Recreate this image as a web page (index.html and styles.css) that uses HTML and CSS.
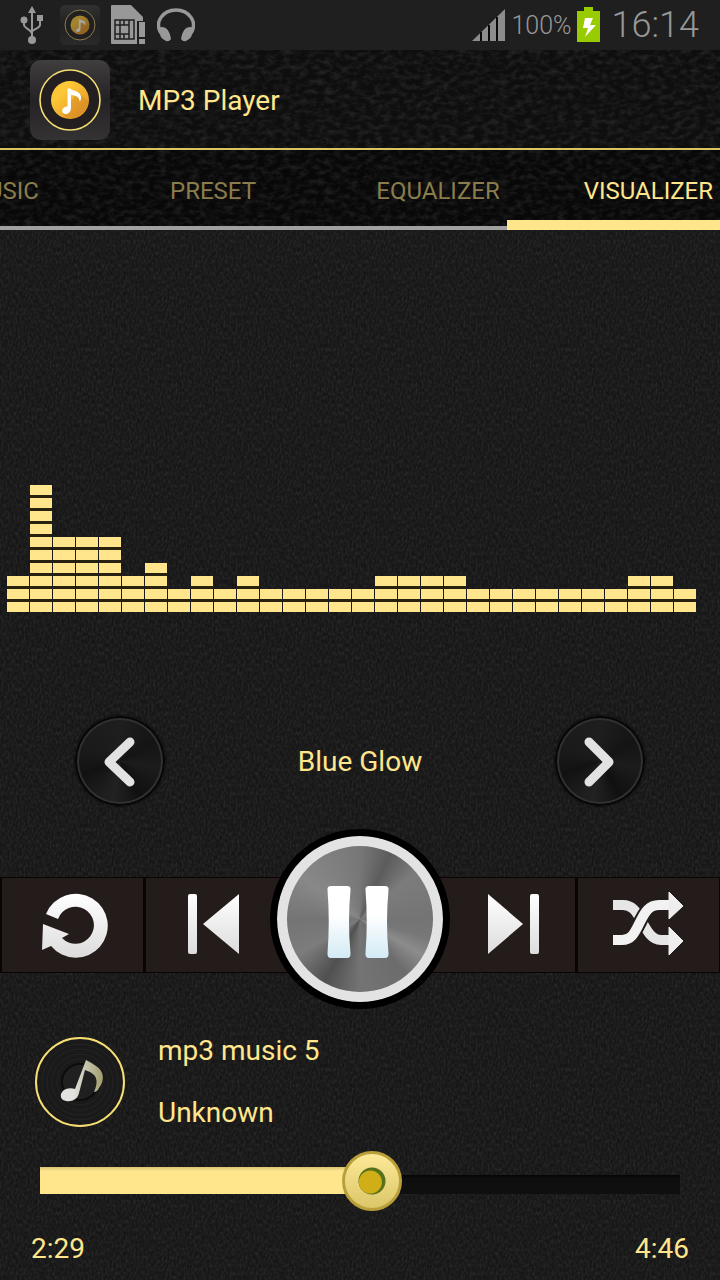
FILE: index.html
```html
<!DOCTYPE html>
<html lang="en">
<head>
    <meta charset="UTF-8">
    <meta name="viewport" content="width=device-width, initial-scale=1.0">
    <title>MP3 Player</title>

    <link rel="stylesheet" href="styles.css">
</head>
<body>

    <!-- shared gradients -->
    <svg class="defs" width="0" height="0" aria-hidden="true">
        <defs>
            <linearGradient id="silver" x1="0" y1="0" x2="0" y2="1">
                <stop offset="0" stop-color="#ffffff"/>
                <stop offset="1" stop-color="#dcdcdc"/>
            </linearGradient>
            <linearGradient id="ice" x1="0" y1="0" x2="0" y2="1">
                <stop offset="0.4" stop-color="#ffffff"/>
                <stop offset="1" stop-color="#d3ebf5"/>
            </linearGradient>
            <linearGradient id="tile" x1="0" y1="0" x2="0" y2="1">
                <stop offset="0" stop-color="#403e3f"/>
                <stop offset="0.5" stop-color="#242224"/>
                <stop offset="1" stop-color="#343233"/>
            </linearGradient>
            <linearGradient id="gold" x1="0" y1="0" x2="1" y2="1">
                <stop offset="0.3" stop-color="#fcc736"/>
                <stop offset="1" stop-color="#dd8b20"/>
            </linearGradient>
            <linearGradient id="noteGold" x1="0" y1="0" x2="1" y2="0">
                <stop offset="0.3" stop-color="#e2e2e0"/>
                <stop offset="1" stop-color="#a39e6c"/>
            </linearGradient>
            <symbol id="appIcon" viewBox="0 0 80 80">
                <rect width="80" height="80" rx="11" fill="url(#tile)"/>
                <circle cx="40" cy="40" r="30" fill="#231f20" stroke="#f6de72" stroke-width="1.6"/>
                <circle cx="40" cy="40" r="19" fill="url(#gold)"/>
                <path d="M48 32 58 41A19 19 0 0 1 36 58L32 53Z" fill="#c97820" opacity=".3"/>
                <path d="M37.500 28.500h2.500c2 2.500 10 2 11 8 .4 2.500-.5 4-1.200 5-.3-4.500-4-6-8.800-6.500v13c0 4-3 6.500-6 6-3.500-.6-4-5 0-7 1-.5 1.800-.6 2.500-.6z" fill="#fff"/>
            </symbol>
        </defs>
    </svg>

    <div class="status">
        <svg width="24" height="40" viewBox="0 0 24 40" fill="none" stroke="#989898" stroke-width="2">
            <path d="M12 8v26M4 16v4c0 3 8 5 8 9M20 15v5c0 3-8 5-8 7"/>
            <path d="M12 1l4 7H8zM17 10h6v6h-6z" fill="#989898" stroke="none"/>
            <circle cx="4" cy="15" r="3.500" fill="#989898" stroke="none"/>
            <circle cx="12" cy="35" r="4" fill="#989898" stroke="none"/>
        </svg>
        <svg class="dim" width="40" height="40"><use href="#appIcon"/></svg>
        <svg width="34" height="40" viewBox="0 0 34 40">
            <path d="M0 1q0-1 1-1h19l12 12v4h-6v23H1q-1 0-1-1z" fill="#989898"/>
            <path d="M4 15h19v19H4zM9 20h9v9H9zM9 15v5M13 15v5M18 15v5M9 29v5M13 29v5M18 29v5M4 20h5M4 29h5" fill="none" stroke="#1f1f1f" stroke-width="1.500"/>
            <path d="M28 17h6v15h-6zM28 34h6v5h-6z" fill="#989898"/>
        </svg>
        <svg width="38" height="34" viewBox="0 0 38 34">
            <path d="M4 25C-3 14 6 2 19 2s22 12 15 23" fill="none" stroke="#989898" stroke-width="3.500"/>
            <path d="M4 19q8-1 10 12-2 3-5 2-7-3-7-12zM34 19q-8-1-10 12 2 3 5 2 7-3 7-12z" fill="#989898"/>
        </svg>
        <svg class="signal" width="33" height="32" viewBox="0 0 33 32">
            <path d="M33 0v32H0z" fill="#8c8c8c"/>
            <path d="M9 23v9M17 16v16M25 8v24" stroke="#080808" stroke-width="2"/>
        </svg>
        <span class="percent">100%</span>
        <svg class="battery" width="23" height="35" viewBox="0 0 23 35">
            <path d="M7 0h9v4h7v31H0V4h7z" fill="#99cc00"/>
            <path d="M8 11h8l-3 7h6L8 30l3-9H6z" fill="#fff"/>
        </svg>
        <span class="clock">16:14</span>
    </div>

    <header class="header">
        <svg width="80" height="80"><use href="#appIcon"/></svg>
        <h1>MP3 Player</h1>
    </header>

    <nav class="tabs">
        <a href="#music">MUSIC</a>
        <a href="#preset">PRESET</a>
        <a href="#equalizer">EQUALIZER</a>
        <a href="#visualizer" class="active">VISUALIZER</a>
    </nav>

    <main>
        <div class="visualizer" id="visualizer"></div>

        <div class="theme">
            <button type="button" class="round" aria-label="Previous theme">
                <svg width="90" height="90" viewBox="0 0 90 90" fill="none" stroke="#e2e2e2" stroke-width="9" stroke-linecap="round" stroke-linejoin="round">
                    <path d="M55 26 34 46l21 20"/>
                </svg>
            </button>
            <span>Blue Glow</span>
            <button type="button" class="round" aria-label="Next theme">
                <svg width="90" height="90" viewBox="0 0 90 90" fill="none" stroke="#e2e2e2" stroke-width="9" stroke-linecap="round" stroke-linejoin="round">
                    <path d="M34 26 54 46 34 66"/>
                </svg>
            </button>
        </div>

        <div class="controls">
            <button type="button" aria-label="Repeat">
                <svg width="72" height="72" viewBox="0 0 72 72" fill="url(#silver)">
                    <path d="M9 25A32 32 0 1 1 14 57L5 61 6 35 32 45 25 49A18.500 18.500 0 1 0 21 30Z"/>
                </svg>
            </button>
            <button type="button" aria-label="Previous">
                <svg width="72" height="72" viewBox="0 0 72 72" fill="url(#silver)">
                    <rect x="7" y="5" width="9" height="60" rx="2"/>
                    <path d="M58 5v60L22 35z"/>
                </svg>
            </button>
            <div class="middle">
                <button type="button" class="pause" aria-label="Pause">
                    <svg width="66" height="74" viewBox="0 0 66 74" fill="url(#ice)">
                        <path d="M4 1h16q4 0 3.500 4-3 32 0 63 .5 5-3.500 5H4q-4 0-3.500-5Q3 37 .5 5 0 1 4 1z"/>
                        <path d="M42 1h16q4 0 3.500 4-3 32 0 63 .5 5-3.500 5H42q-4 0-3.500-5Q41 37 38.500 5 38 1 42 1z"/>
                    </svg>
                </button>
            </div>
            <button type="button" aria-label="Next">
                <svg width="72" height="72" viewBox="0 0 72 72" fill="url(#silver)">
                    <rect x="62" y="5" width="9" height="60" rx="2"/>
                    <path d="M20 5v60l35-30z"/>
                </svg>
            </button>
            <button type="button" aria-label="Shuffle">
                <svg width="72" height="72" viewBox="0 0 72 72">
                    <path d="M0 16h10c9 0 13 6 18 15s10 20 20 20h10" fill="none" stroke="#e6e6e6" stroke-width="10"/>
                    <path d="M0 51h9c10 0 13-8 18-18s9-17 19-17h11" fill="none" stroke="#241c1a" stroke-width="14"/>
                    <path d="M0 51h9c10 0 13-8 18-18s9-17 19-17h11" fill="none" stroke="#f2f2f2" stroke-width="10"/>
                    <path d="M56 3 70 17 56 30zM56 38 70 52 56 66z" fill="#eeeeee" stroke="#eeeeee" stroke-linejoin="round"/>
                </svg>
            </button>
        </div>

        <div class="track">
            <svg width="90" height="90" viewBox="0 0 90 90">
                <circle cx="45" cy="45" r="44" fill="#1a1a1a" stroke="#f6de72" stroke-width="2"/>
                <g fill="none" stroke="#242424">
                    <circle cx="45" cy="45" r="38"/>
                    <circle cx="45" cy="45" r="33"/>
                    <circle cx="45" cy="45" r="28"/>
                    <circle cx="45" cy="45" r="23"/>
                </g>
                <circle cx="45" cy="45" r="18" fill="#202020" stroke="#0c0c0c" stroke-width="2"/>
                <path d="M51 23q6 3 10 6c8 5 9 14 3 22q-2 4-5 4c4-9 4-16-4-20L50 33 44 56c-1 6-7 9-13 8-7-1-7-9 0-12 3-1 6-1 9 0z" fill="url(#noteGold)"/>
            </svg>
            <div class="info">
                <span>mp3 music 5</span>
                <span>Unknown</span>
            </div>
        </div>

        <input type="range" class="seek" id="seek" min="0" max="286" value="149" aria-label="Position" style="--progress: 52%">

        <div class="times">
            <span id="elapsed">2:29</span>
            <span>4:46</span>
        </div>
    </main>

    <script>
        let levels = [3, 10, 6, 6, 6, 3, 4, 2, 3, 2, 3, 2, 2, 2, 2, 2, 3, 3, 3, 3, 2, 2, 2, 2, 2, 2, 2, 3, 3, 2];
        let visualizer = document.getElementById("visualizer");

        // each block is 10px high with a 3px gap
        levels.forEach(function(level) {
            let bar = document.createElement("div");
            bar.className = "bar";
            bar.style.height = (level * 13 - 3) + "px";
            visualizer.appendChild(bar);
        });

        document.getElementById("seek").addEventListener("input", function() {
            let seconds = this.value % 60;
            this.style.setProperty("--progress", (this.value / this.max * 100) + "%");
            document.getElementById("elapsed").innerText = Math.floor(this.value / 60) + ":" + String(seconds).padStart(2, "0");
        });
    </script>

</body>
</html>
```

FILE: styles.css
```css
* {
    box-sizing: border-box;
}

body {
    margin: 0;
    min-height: 100vh;
    display: flex;
    flex-direction: column;
    overflow-x: hidden;
    font-family: Roboto, "Noto Sans", sans-serif;
    font-size: 28px;
    line-height: 34px;
    color: #ffe68c;
    background-color: #161616;
    background-image: url("data:image/svg+xml,%3Csvg xmlns='http://www.w3.org/2000/svg' width='240' height='240'%3E%3Cfilter id='n' x='0' y='0' width='1' height='1'%3E%3CfeTurbulence type='fractalNoise' baseFrequency='.5 .25' numOctaves='2' stitchTiles='stitch'/%3E%3CfeColorMatrix values='0 0 0 0 1 0 0 0 0 1 0 0 0 0 1 .15 0 0 0 -.05'/%3E%3C/filter%3E%3Crect width='240' height='240' filter='url(%23n)'/%3E%3C/svg%3E");
}

button {
    padding: 0;
    border: none;
    background: none;
    cursor: pointer;
}

svg {
    display: block;
    flex-shrink: 0;
}

.defs {
    position: absolute;
}

/* status bar */
.status {
    display: flex;
    align-items: center;
    height: 50px;
    padding: 0 21px 0 20px;
    background-color: #1f1f1f;
    color: #989898;
    font-weight: 300;
}

.status .dim {
    margin: 0 11px 0 16px;
    opacity: 0.6;
}

.status .dim + svg {
    margin-right: 12px;
}

.signal {
    margin-left: auto;
}

.percent {
    margin: 0 5px 0 6px;
    padding-top: 2px;
    font-size: 25px;
}

.battery {
    margin-bottom: 2px;
}

.clock {
    margin-left: 12px;
    font-size: 36px;
}

/* header and tabs */
.header, .tabs {
    background-color: #080808;
    background-image: url("data:image/svg+xml,%3Csvg xmlns='http://www.w3.org/2000/svg' width='1440' height='100'%3E%3Cfilter id='n' x='0' y='0' width='1' height='1'%3E%3CfeTurbulence type='fractalNoise' baseFrequency='.12 .2' numOctaves='3' stitchTiles='stitch'/%3E%3CfeColorMatrix values='0 0 0 0 1 0 0 0 0 1 0 0 0 0 1 .2 0 0 0 -.08'/%3E%3C/filter%3E%3Crect width='1440' height='100' filter='url(%23n)'/%3E%3C/svg%3E");
}

.header {
    display: flex;
    align-items: center;
    gap: 28px;
    height: 100px;
    padding: 2px 30px 0;
    background-color: #0e0e0e;
    border-bottom: 2px solid #d8c55e;
}

.header h1 {
    margin: 0;
    padding-top: 2px;
    font-size: 28px;
    font-weight: 400;
}

.tabs {
    position: relative;
    display: grid;
    grid-template-columns: minmax(0, 102fr) minmax(0, 222fr) minmax(0, 228fr) minmax(0, 168fr);
    align-items: center;
    height: 80px;
    border-bottom: 4px solid #a0a0a0;
    font-size: 24px;
}

.tabs a {
    display: flex;
    justify-content: center;
    padding-top: 6px;
    color: #8a7c4c;
    text-decoration: none;
}

.tabs a:first-child {
    justify-content: flex-end;
    padding-right: 63px;
}

.tabs a.active {
    justify-content: flex-end;
    padding-right: 7px;
    color: #ffe68c;
}

.tabs::after {
    content: "";
    position: absolute;
    right: 0;
    bottom: -4px;
    width: 213px;
    height: 10px;
    background-color: #ffe68c;
}

main {
    flex: 1;
    display: flex;
    flex-direction: column;
}

/* visualizer */
.visualizer {
    flex: 1;
    display: flex;
    align-items: flex-end;
    gap: 1px;
    min-height: 160px;
    padding: 0 24px 0 7px;
}

.bar {
    flex: 1;
    background: repeating-linear-gradient(to top, #ffe68c 0 10px, #28210f 10px 13px);
}

/* theme chooser */
.theme {
    display: grid;
    grid-template-columns: 1fr 1fr 1fr;
    place-items: center;
    margin-top: 104px;
}

.theme span {
    padding-top: 2px;
}

.round {
    border-radius: 50%;
    background: conic-gradient(#1e1e1e, #141414 60deg, #1c1c1c 100deg, #101010 150deg, #222 190deg, #121212 250deg, #1a1a1a 290deg, #1e1e1e);
    box-shadow: inset 0 0 0 2px #060606, inset 0 0 0 4px #303030, 0 0 3px #000;
}

/* player buttons */
.controls {
    display: grid;
    grid-template-columns: repeat(5, 1fr);
    height: 96px;
    margin-top: 71px;
}

.controls > * {
    display: flex;
    justify-content: center;
    align-items: center;
    background-color: #241c1a;
    border: 1px solid #0a0504;
    border-width: 1px 1px 1px 2px;
}

.middle {
    position: relative;
}

.controls > .middle, .controls > .middle + button {
    border-left: none;
}

.controls > .middle {
    border-right: none;
}

.pause {
    position: absolute;
    top: -49px;
    display: flex;
    justify-content: center;
    align-items: center;
    width: 180px;
    height: 180px;
    padding-top: 6px;
    border: 7px solid #000;
    border-radius: 50%;
    background: conic-gradient(#777, #5c5c5c 25deg, #7c7c7c 50deg, #747474 90deg, #777 105deg, #8c8c8c 120deg, #6c6c6c 140deg, #747474 180deg, #505050 210deg, #7c7c7c 240deg, #747474 270deg, #888 305deg, #777);
    box-shadow: inset 0 0 0 10px #e3e3e3;
}

/* current track */
.track {
    display: flex;
    align-items: center;
    gap: 33px;
    margin-top: 60px;
    padding: 0 35px;
}

.info {
    display: flex;
    flex-direction: column;
    gap: 28px;
    padding-top: 1px;
}

.seek {
    -webkit-appearance: none;
    appearance: none;
    height: 60px;
    margin: 20px 40px 0;
    background: none;
}

.seek::-webkit-slider-runnable-track {
    height: 27px;
    background: linear-gradient(#d8c375, #ffe68c 4px) left / var(--progress) 27px no-repeat,
        linear-gradient(#050505, #0f0f0f 4px) bottom / 100% 19px no-repeat;
}

.seek::-webkit-slider-thumb {
    -webkit-appearance: none;
    width: 60px;
    height: 60px;
    margin-top: -16px;
    border: 3px solid #b99f3a;
    border-radius: 50%;
    background: radial-gradient(circle at 47% 52%, #cfae18 0 11px, transparent 12px),
        radial-gradient(circle, #57701a 0 13px, transparent 14px),
        linear-gradient(#ffeb99, #d9c466) border-box;
}

.times {
    display: flex;
    justify-content: space-between;
    margin-top: 22px;
    padding: 0 31px 14px;
}
```
